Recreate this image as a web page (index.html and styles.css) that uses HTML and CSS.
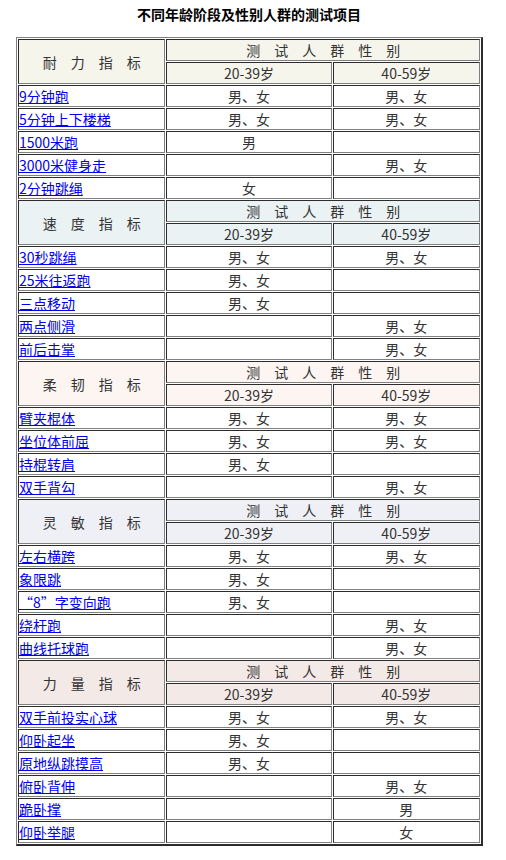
FILE: index.html
```html
<!DOCTYPE html>
<html lang="zh-CN">
<head>
<meta charset="utf-8">
<title>不同年龄阶段及性别人群的测试项目</title>
<link rel="stylesheet" href="styles.css">
</head>
<body>
<div class="title">不同年龄阶段及性别人群的测试项目</div>
<table class="tests">
<colgroup><col class="c1"><col class="c2"><col class="c3"></colgroup>
<tbody>
<tr class="s1"><td class="cat" rowspan="2">耐　力　指　标</td><td class="grp" colspan="2">测　试　人　群　性　别</td></tr>
<tr class="s1"><td class="age">20-39岁</td><td class="age">40-59岁</td></tr>
<tr><td class="item"><a href="#">9分钟跑</a></td><td>男、女</td><td>男、女</td></tr>
<tr><td class="item"><a href="#">5分钟上下楼梯</a></td><td>男、女</td><td>男、女</td></tr>
<tr><td class="item"><a href="#">1500米跑</a></td><td>男</td><td></td></tr>
<tr><td class="item"><a href="#">3000米健身走</a></td><td></td><td>男、女</td></tr>
<tr><td class="item"><a href="#">2分钟跳绳</a></td><td>女</td><td></td></tr>

<tr class="s2"><td class="cat" rowspan="2">速　度　指　标</td><td class="grp" colspan="2">测　试　人　群　性　别</td></tr>
<tr class="s2"><td class="age">20-39岁</td><td class="age">40-59岁</td></tr>
<tr><td class="item"><a href="#">30秒跳绳</a></td><td>男、女</td><td>男、女</td></tr>
<tr><td class="item"><a href="#">25米往返跑</a></td><td>男、女</td><td></td></tr>
<tr><td class="item"><a href="#">三点移动</a></td><td>男、女</td><td></td></tr>
<tr><td class="item"><a href="#">两点侧滑</a></td><td></td><td>男、女</td></tr>
<tr><td class="item"><a href="#">前后击掌</a></td><td></td><td>男、女</td></tr>

<tr class="s3"><td class="cat" rowspan="2">柔　韧　指　标</td><td class="grp" colspan="2">测　试　人　群　性　别</td></tr>
<tr class="s3"><td class="age">20-39岁</td><td class="age">40-59岁</td></tr>
<tr><td class="item"><a href="#">臂夹棍体</a></td><td>男、女</td><td>男、女</td></tr>
<tr><td class="item"><a href="#">坐位体前屈</a></td><td>男、女</td><td>男、女</td></tr>
<tr><td class="item"><a href="#">持棍转肩</a></td><td>男、女</td><td></td></tr>
<tr><td class="item"><a href="#">双手背勾</a></td><td></td><td>男、女</td></tr>

<tr class="s4"><td class="cat" rowspan="2">灵　敏　指　标</td><td class="grp" colspan="2">测　试　人　群　性　别</td></tr>
<tr class="s4"><td class="age">20-39岁</td><td class="age">40-59岁</td></tr>
<tr><td class="item"><a href="#">左右横跨</a></td><td>男、女</td><td>男、女</td></tr>
<tr><td class="item"><a href="#">象限跳</a></td><td>男、女</td><td></td></tr>
<tr><td class="item"><a href="#">“8”字变向跑</a></td><td>男、女</td><td></td></tr>
<tr><td class="item"><a href="#">绕杆跑</a></td><td></td><td>男、女</td></tr>
<tr><td class="item"><a href="#">曲线托球跑</a></td><td></td><td>男、女</td></tr>

<tr class="s5"><td class="cat" rowspan="2">力　量　指　标</td><td class="grp" colspan="2">测　试　人　群　性　别</td></tr>
<tr class="s5"><td class="age">20-39岁</td><td class="age">40-59岁</td></tr>
<tr><td class="item"><a href="#">双手前投实心球</a></td><td>男、女</td><td>男、女</td></tr>
<tr><td class="item"><a href="#">仰卧起坐</a></td><td>男、女</td><td></td></tr>
<tr><td class="item"><a href="#">原地纵跳摸高</a></td><td>男、女</td><td></td></tr>
<tr><td class="item"><a href="#">俯卧背伸</a></td><td></td><td>男、女</td></tr>
<tr><td class="item"><a href="#">跪卧撑</a></td><td></td><td>男</td></tr>
<tr><td class="item"><a href="#">仰卧举腿</a></td><td></td><td>女</td></tr>
</tbody>
</table>
</body>
</html>
```

FILE: styles.css
```css
html, body {
  margin: 0;
  padding: 0;
  background: #ffffff;
}

body {
  width: 498px;
  font-family: "Noto Sans CJK SC", "Noto Sans", sans-serif;
  font-size: 14px;
  color: #333333;
}

.title {
  margin: 5px 0 14px;
  line-height: 18px;
  text-align: center;
  font-weight: bold;
  font-size: 14px;
  color: #000000;
}

.tests {
  margin-left: 16px;
  width: 467px;
  table-layout: fixed;
  border-collapse: separate;
  border-spacing: 1px;
  border-style: outset;
  border-color: #808080;
  border-width: 1px 2px 2px 1px;
}

.c1 { width: 147px; }
.c2 { width: 165px; }
.c3 { width: 147px; }

.tests td {
  border: 1px inset #808080;
  padding: 1px;
  height: 18px;
  line-height: 18px;
  text-align: center;
  vertical-align: middle;
  white-space: nowrap;
  overflow: hidden;
  color: #333333;
}

.tests td.item {
  text-align: left;
  padding: 1px 0;
}

.tests a {
  color: #0000ee;
  text-decoration: underline;
}

.s1 td { background: #f6f5ec; }
.s2 td { background: #eaf2f3; }
.s3 td { background: #fdf5f1; }
.s4 td { background: #eef0f6; }
.s5 td { background: #f3e9e6; }
```
